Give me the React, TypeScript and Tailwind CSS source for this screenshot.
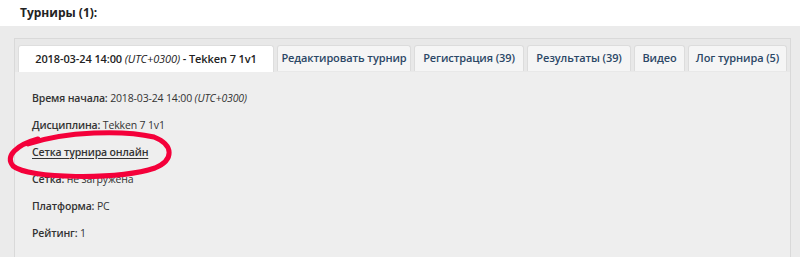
import React from 'react'

const tabs = [
  { label: 'Редактировать турнир', w: 'w-[134px]' },
  { label: 'Регистрация (39)', w: 'w-[110px]' },
  { label: 'Результаты (39)', w: 'w-[104px]' },
  { label: 'Видео', w: 'w-[51px]' },
  { label: 'Лог турнира (5)', w: 'w-[99px]' },
]

const rows = [
  { label: 'Дисциплина:', value: 'Tekken 7 1v1' },
]

const App = () => {
  return (
    <div className="relative w-[800px] h-[257px] overflow-hidden bg-[#ebebeb] font-['Open_Sans',sans-serif] text-[#333]">
      {/* Heading */}
      <div className="h-[26px] bg-white pl-5 pt-[4px]">
        <h2 className="text-[12px] font-bold leading-[17px] text-[#222]">Турниры (1):</h2>
      </div>

      <div className="pt-3 pl-[14px] pr-[9px]">
        <div className="h-[260px] border border-[#d9d9d9] bg-[#eeeeee]">
          {/* Tabs */}
          <div className="flex gap-[3px] bg-[#e8e8e8] px-[3px] pt-[6px]">
            <div className="flex h-[27px] w-[256px] items-center justify-center whitespace-nowrap rounded-t-[3px] border border-b-0 border-[#dedede] bg-white text-[11px] font-semibold tracking-[-0.1px] text-[#222]">
              <span>
                2018-03-24 14:00 <i className="font-normal">(UTC+0300)</i> - Tekken 7 1v1
              </span>
            </div>
            {tabs.map((tab, i) => (
              <div
                key={i}
                className={`flex h-[26px] ${tab.w} items-center justify-center whitespace-nowrap rounded-t-[3px] border border-b-0 border-[#dcdcdc] bg-[#f5f5f5] text-[11px] font-semibold tracking-[-0.1px] text-[#2b4766]`}
              >
                {tab.label}
              </div>
            ))}
          </div>

          {/* Details */}
          <div className="flex flex-col gap-[9px] pl-[17px] pt-[17px] text-[10.5px] leading-[18px] tracking-[-0.15px]">
            <p>
              <span className="font-semibold">Время начала:</span> 2018-03-24 14:00 <i>(UTC+0300)</i>
            </p>
            {rows.map((row, i) => (
              <p key={i}>
                <span className="font-semibold">{row.label}</span> {row.value}
              </p>
            ))}
            <p>
              <a className="font-semibold underline underline-offset-2">Сетка турнира онлайн</a>
            </p>
            <p>
              <span className="font-semibold">Сетка:</span> не загружена
            </p>
            <p>
              <span className="font-semibold">Платформа:</span> PC
            </p>
            <p>
              <span className="font-semibold">Рейтинг:</span> 1
            </p>
          </div>
        </div>
      </div>

      {/* Hand-drawn red annotation */}
      <svg className="pointer-events-none absolute left-0 top-0" width="800" height="257" viewBox="0 0 800 257">
        <path
          d="M38 139 C16 145 5 156 13 166 C28 179 118 180 155 168 C174 160 174 145 154 137 C124 130 66 131 28 144"
          fill="none"
          stroke="#f4003a"
          strokeWidth="5"
          strokeLinecap="round"
        />
      </svg>
    </div>
  )
}

export default App
